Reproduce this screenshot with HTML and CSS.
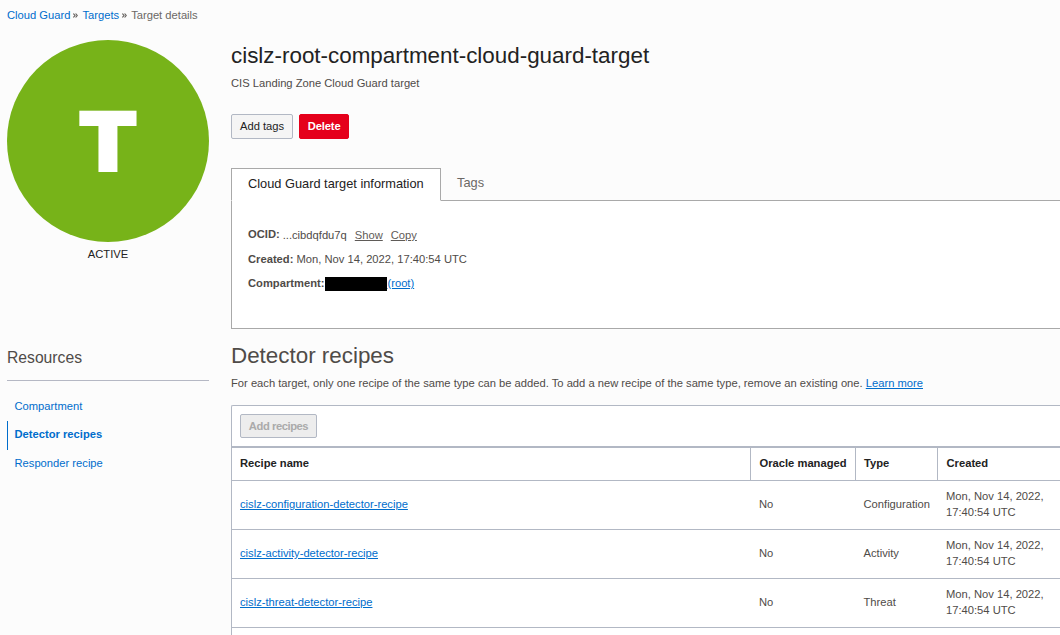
FILE: index.html
```html
<!DOCTYPE html>
<html lang="en">
<head>
<meta charset="utf-8">
<title>Target details</title>
<link rel="stylesheet" href="styles.css">
</head>
<body>
<nav class="breadcrumb">
  <a href="#">Cloud Guard</a><svg class="sep" viewBox="0 0 5 5"><path d="M.4.5 2 2.5.4 4.5M2.6.5 4.2 2.5 2.6 4.5"/></svg><a href="#">Targets</a><svg class="sep" viewBox="0 0 5 5"><path d="M.4.5 2 2.5.4 4.5M2.6.5 4.2 2.5 2.6 4.5"/></svg><span>Target details</span>
</nav>
<div class="layout">
  <aside class="side">
    <div class="badge"><span class="letter">T</span></div>
    <div class="status">ACTIVE</div>
    <h3 class="side-title">Resources</h3>
    <ul class="resources">
      <li><a href="#">Compartment</a></li>
      <li class="current"><a href="#">Detector recipes</a></li>
      <li><a href="#">Responder recipe</a></li>
    </ul>
  </aside>
  <main class="main">
    <h1 class="title">cislz-root-compartment-cloud-guard-target</h1>
    <p class="description">CIS Landing Zone Cloud Guard target</p>
    <div class="actions">
      <button class="btn">Add tags</button>
      <button class="btn danger">Delete</button>
    </div>
    <div class="tabs">
      <div class="tab active">Cloud Guard target information</div>
      <div class="tab">Tags</div>
    </div>
    <section class="panel">
      <div class="field ocid"><b>OCID:</b><span class="value">...cibdqfdu7q</span><a href="#">Show</a><a href="#">Copy</a></div>
      <div class="field created"><b>Created:</b> Mon, Nov 14, 2022, 17:40:54 UTC</div>
      <div class="field compartment"><b>Compartment:</b><span class="redacted"></span><a href="#">(root)</a></div>
    </section>
    <h2 class="section-title">Detector recipes</h2>
    <p class="note">For each target, only one recipe of the same type can be added. To add a new recipe of the same type, remove an existing one. <a href="#">Learn more</a></p>
    <section class="list">
      <div class="toolbar"><button class="btn disabled" disabled>Add recipes</button></div>
      <div class="row head"><div>Recipe name</div><div>Oracle managed</div><div>Type</div><div>Created</div></div>
      <div class="row"><div><a href="#">cislz-configuration-detector-recipe</a></div><div>No</div><div>Configuration</div><div>Mon, Nov 14, 2022, 17:40:54 UTC</div></div>
      <div class="row"><div><a href="#">cislz-activity-detector-recipe</a></div><div>No</div><div>Activity</div><div>Mon, Nov 14, 2022, 17:40:54 UTC</div></div>
      <div class="row"><div><a href="#">cislz-threat-detector-recipe</a></div><div>No</div><div>Threat</div><div>Mon, Nov 14, 2022, 17:40:54 UTC</div></div>
    </section>
  </main>
</div>
</body>
</html>
```
FILE: styles.css
```css
* { box-sizing: border-box; }
body {
  display: flex;
  flex-direction: column;
  margin: 0;
  height: 100vh;
  background: #fcfcfc;
  color: #4f4b48;
  font: 11.2px/16px "Liberation Sans", Arial, sans-serif;
}
h1, h2, h3, p, ul { margin: 0; padding: 0; font-weight: 400; }
a { color: #006dcc; }
.breadcrumb { display: flex; flex: none; align-items: center; height: 40px; padding: 0 0 10px 7px; color: #6b6865; }
.breadcrumb a { text-decoration: none; }
.sep { width: 5px; height: 5px; margin: 0 4px 0 3px; fill: none; stroke: #65615e; stroke-width: 1.2; }
.layout { display: flex; flex: 1; padding-left: 7px; }
.side { flex: none; width: 202px; margin-right: 22px; }
.badge {
  display: flex;
  align-items: center;
  justify-content: center;
  height: 202px;
  border-radius: 50%;
  background: #77b319;
  color: #fff;
}
.letter { padding-top: 4px; font: 700 79px/80px "DejaVu Sans", sans-serif; -webkit-text-stroke: 4px #fff; }
.status { margin-top: 4px; text-align: center; color: #222; }
.side-title { margin-top: 84px; height: 35px; padding-top: 2px; border-bottom: 1px solid #b5b8c4; font-size: 15.7px; line-height: 20px; }
.resources { margin-top: 11px; list-style: none; }
.resources li { height: 29px; padding: 6px 0 0 7.5px; }
.resources a { text-decoration: none; }
.resources .current { border-left: 1px solid #006dcc; padding: 5px 0 0 6.5px; font-weight: 700; }
.resources .current + li { padding-top: 5px; }
.main { display: flex; flex: 1; flex-direction: column; min-width: 0; }
.title { padding-top: 2px; font-size: 22.4px; line-height: 28px; color: #222; }
.description { margin-top: 5px; }
.actions { display: flex; gap: 6px; margin-top: 23px; }
.btn {
  height: 25px;
  padding: 0 8px 1px;
  border: 1px solid #b2b8c4;
  border-radius: 2px;
  background: #f5f5f5;
  color: #222;
  font: inherit;
}
.danger { width: 50px; padding: 0 0 1px; border-color: #e5001b; background: #e5001b; color: #fff; font-weight: 700; letter-spacing: -.15px; }
.tabs { display: flex; height: 33px; margin-top: 29px; font-size: 12.8px; }
.tab { flex: 1; padding: 7px 16px 0; border-bottom: 1px solid #a9a9a9; color: #6b6865; }
.tab.active { flex: none; width: 210px; border: 1px solid #a9a9a9; border-bottom-color: #fff; background: #fff; color: #222; white-space: nowrap; }
.panel { height: 128px; padding: 26px 16px 0; border: solid #a9a9a9; border-width: 0 0 1px 1px; background: #fff; }
.field { display: flex; align-items: center; height: 16px; margin-bottom: 8px; white-space: pre; }
.ocid a { margin-left: 8px; color: #5f5b58; }
.ocid b { padding-bottom: 2px; }
.ocid .value { margin-left: 3px; }
.redacted { width: 62px; height: 14px; margin: 1px 0 0 1px; background: #000; }
.section-title { margin-top: 13px; font-size: 22.4px; line-height: 28px; }
.note { margin-top: 5px; white-space: nowrap; }
.list { flex: 1; margin-top: 14px; border: solid #b2b8c4; border-width: 1px 0 0 1px; border-top-left-radius: 2px; background: #fff; }
.toolbar { height: 42px; padding: 8px; border-bottom: 2px solid #b2b8c4; }
.btn.disabled { display: block; width: 77px; height: 24px; padding: 0; background: #ededed; color: #aaa; font-weight: 700; letter-spacing: -.43px; }
.row { display: grid; grid-template-columns: 518px 105px 82px 1fr; height: 49px; border-bottom: 1px solid #b2b8c4; }
.row > div { display: flex; align-items: center; padding: 0 8px 2px; }
.row > div + div { padding-left: 9px; }
.row > div:nth-child(3) { padding-left: 8.5px; }
.row > div:last-child { padding-right: 12px; }
.head { height: 33px; color: #222; font-weight: 700; }
.row.head > div + div { padding: 0 0 2px 8.5px; border-left: 1px solid #b2b8c4; }
.row.head > div:nth-child(3) { padding-left: 8px; }
```
